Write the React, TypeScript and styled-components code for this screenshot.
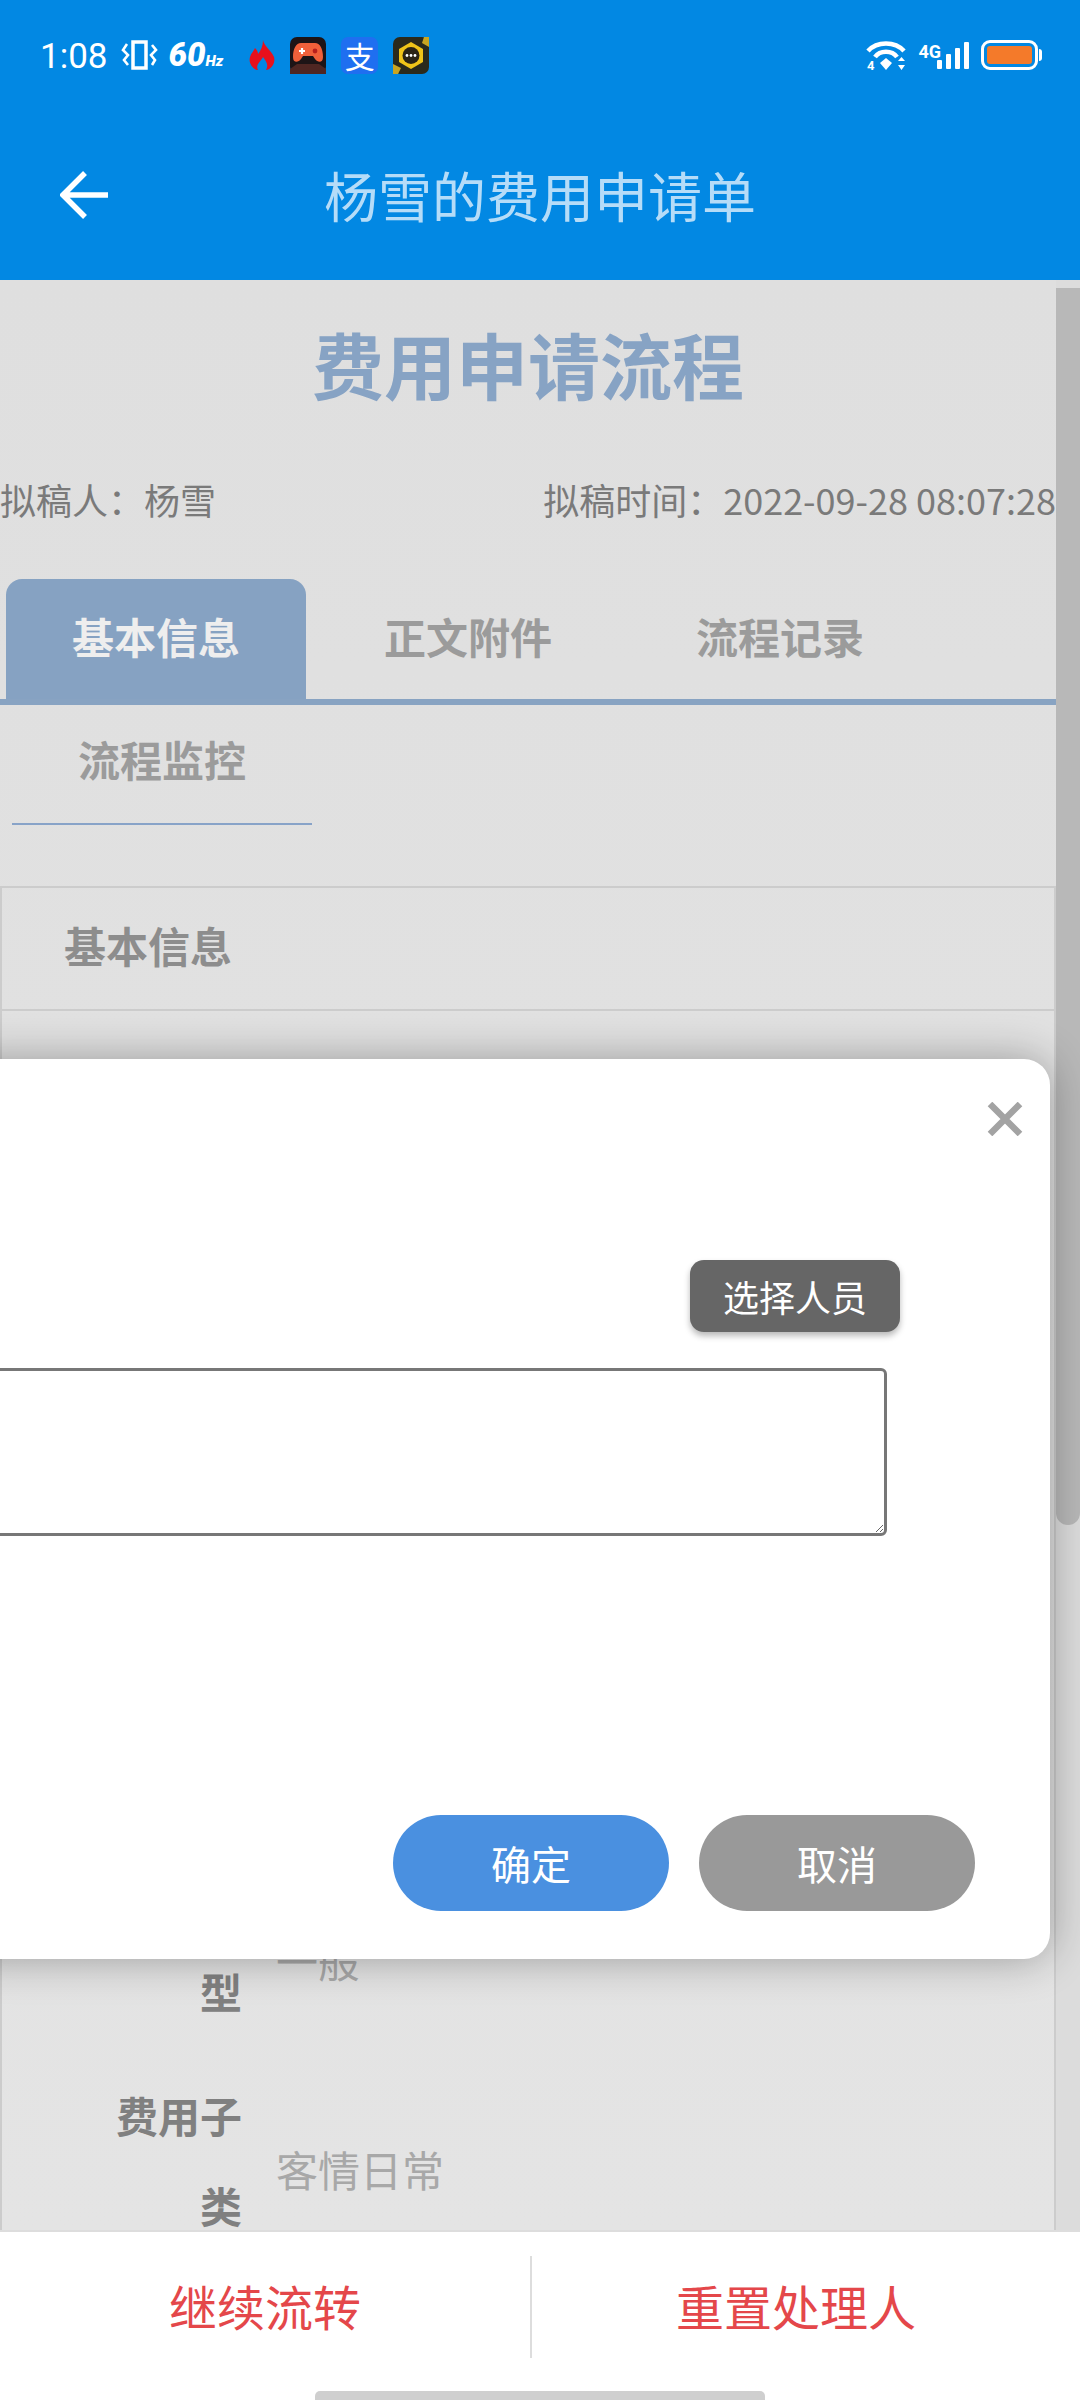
import styled, { createGlobalStyle } from 'styled-components'

const GlobalStyle = createGlobalStyle`
  html, body {
    margin: 0;
    padding: 0;
    background: #fff;
    font-family: "Noto Sans CJK SC", "Noto Sans", sans-serif;
  }
  * {
    box-sizing: border-box;
  }
`

const Screen = styled.div`
  position: relative;
  display: flex;
  flex-direction: column;
  width: 1080px;
  height: 2400px;
  overflow: hidden;
`

const Header = styled.header`
  flex: 0 0 280px;
  background: #0288e3;
  color: #fff;
`

const StatusBar = styled.div`
  display: flex;
  align-items: center;
  justify-content: space-between;
  height: 110px;
  padding: 0 42px 0 40px;
`

const StatusGroup = styled.div`
  display: flex;
  align-items: center;
`

const Time = styled.span`
  font-family: Roboto, sans-serif;
  font-size: 35px;
  line-height: 40px;
  margin: 4px 13px 0 0;
`

const RefreshRate = styled.span`
  font-family: Roboto, sans-serif;
  font-style: italic;
  font-weight: 900;
  font-size: 33px;
  line-height: 40px;
  margin: 5px 26px 0 11px;
  small {
    font-size: 15px;
  }
`

const AppIcons = styled.div`
  display: flex;
  align-items: center;
  gap: 15px;
`

const AlipayIcon = styled.span`
  display: flex;
  align-items: center;
  justify-content: center;
  width: 37px;
  height: 37px;
  border-radius: 7px;
  background: #1f6ff0;
  color: #fff;
  font-size: 30px;
  line-height: 37px;
`

const Network = styled.span`
  font-family: Roboto, sans-serif;
  font-weight: 700;
  font-size: 18px;
  line-height: 18px;
  align-self: flex-start;
  margin: 3px -4px 0 12px;
`

const Battery = styled.div`
  display: flex;
  align-items: center;
  width: 57px;
  height: 30px;
  margin-left: 12px;
  padding: 3px;
  border: 3px solid #fff;
  border-radius: 9px;
  position: relative;
  &::after {
    content: '';
    position: absolute;
    right: -7px;
    top: 6px;
    width: 3px;
    height: 12px;
    border-radius: 0 3px 3px 0;
    background: #fff;
  }
`

const BatteryLevel = styled.div`
  width: 100%;
  height: 100%;
  border-radius: 3px;
  background: #f47a2a;
`

const Toolbar = styled.div`
  display: grid;
  grid-template-columns: 1fr auto 1fr;
  align-items: center;
  height: 170px;
`

const BackIcon = styled.svg`
  display: block;
  width: 50px;
  height: 50px;
  margin-left: 60px;
`

const ToolbarTitle = styled.h1`
  margin: 0;
  font-size: 54px;
  font-weight: 400;
  line-height: 70px;
  color: #b5dcf8;
`

const Main = styled.main`
  position: relative;
  flex: 1;
  display: flex;
  min-height: 0;
  overflow: hidden;
  background: linear-gradient(#dfdfdf, #e4e4e4);
`

const Content = styled.div`
  flex: 0 0 1056px;
  padding-top: 43px;
`

const FlowTitle = styled.h2`
  margin: 0;
  font-size: 72px;
  font-weight: 700;
  line-height: 80px;
  text-align: center;
  color: #87a3c4;
`

const MetaRow = styled.div`
  display: flex;
  justify-content: space-between;
  margin-top: 76px;
  font-size: 36px;
  line-height: 40px;
  color: #7a7a7a;
  white-space: nowrap;
`

const TabRow = styled.div`
  display: flex;
  gap: 12px;
  margin-top: 60px;
  padding-left: 6px;
  border-bottom: 6px solid #88a3c2;
`

const Tab = styled.div<{ $active?: boolean }>`
  width: 300px;
  height: 120px;
  border-radius: 16px 16px 0 0;
  background: ${({ $active }) => ($active ? '#86a2c2' : 'transparent')};
  color: ${({ $active }) => ($active ? '#eeeeee' : '#9b9b9b')};
  font-size: 42px;
  font-weight: 700;
  line-height: 114px;
  text-align: center;
`

const WrappedTab = styled.div`
  width: 300px;
  height: 120px;
  margin-left: 12px;
  border-bottom: 2px solid #88a3c8;
  color: #9b9b9b;
  font-size: 42px;
  font-weight: 700;
  line-height: 108px;
  text-align: center;
`

const SectionTitle = styled.div`
  height: 125px;
  margin-top: 61px;
  padding-left: 62px;
  border: 2px solid #cccccc;
  color: #8d8d8d;
  font-size: 42px;
  font-weight: 700;
  line-height: 114px;
`

const FormBody = styled.div`
  display: flex;
  flex-direction: column;
  gap: 34px;
  min-height: 1221px;
  padding-top: 845px;
  border: solid #cccccc;
  border-width: 0 2px;
`

const FormRow = styled.div`
  display: flex;
  align-items: center;
`

const FormLabel = styled.div`
  width: 126px;
  margin-left: 114px;
  color: #808080;
  font-size: 42px;
  font-weight: 700;
  line-height: 90px;
  text-align: right;
`

const FormValue = styled.div<{ $drop: number }>`
  margin-left: 34px;
  padding-top: ${({ $drop }) => $drop}px;
  color: #a8a8a8;
  font-size: 42px;
  line-height: 56px;
`

const ScrollTrack = styled.div`
  flex: 0 0 24px;
  padding-top: 8px;
  background: #dcdcdc;
`

const ScrollThumb = styled.div`
  height: 1237px;
  border-radius: 0 0 12px 12px;
  background: #b8b8b8;
`

const Modal = styled.section`
  position: absolute;
  top: 779px;
  left: -50px;
  display: flex;
  flex-direction: column;
  align-items: flex-end;
  width: 1100px;
  height: 900px;
  padding: 43px 27px 48px 0;
  border-radius: 26px;
  background: #fff;
  box-shadow: 0 0 44px rgba(0, 0, 0, 0.32);
`

const CloseIcon = styled.svg`
  display: block;
  width: 36px;
  height: 34px;
`

const PickButton = styled.button`
  width: 210px;
  height: 72px;
  margin: 124px 123px 0 0;
  padding: 0;
  border: 0;
  border-radius: 14px;
  background: #666666;
  color: #fff;
  font-family: inherit;
  font-size: 36px;
  box-shadow: 0 4px 6px rgba(0, 0, 0, 0.28);
`

const Remark = styled.textarea`
  display: block;
  width: 1050px;
  height: 168px;
  margin: 36px 136px 0 0;
  border: 3px solid #777777;
  border-radius: 6px;
  outline: none;
  background: #fff;
`

const ModalActions = styled.div`
  display: flex;
  gap: 30px;
  margin: auto 48px 0 0;
`

const ActionButton = styled.button<{ $tone: string }>`
  width: 276px;
  height: 96px;
  padding: 0;
  border: 0;
  border-radius: 48px;
  background: ${({ $tone }) => $tone};
  color: #fff;
  font-family: inherit;
  font-size: 40px;
`

const Footer = styled.footer`
  flex: 0 0 170px;
  display: grid;
  grid-template-columns: 530px 530px;
  align-items: start;
  padding-top: 24px;
  border-top: 2px solid #dddddd;
  background: #fff;
`

const FooterAction = styled.div<{ $divided?: boolean }>`
  height: 102px;
  border-left: ${({ $divided }) => ($divided ? '2px solid #dddddd' : '0')};
  color: #e4474a;
  font-size: 48px;
  line-height: 98px;
  text-align: center;
`

const HomeIndicator = styled.div`
  position: absolute;
  left: 315px;
  bottom: 0;
  width: 450px;
  height: 9px;
  border-radius: 5px 5px 0 0;
  background: #cfcfcf;
`

const VibrateGlyph = () => (
  <svg width="37" height="30" viewBox="0 0 37 30" fill="none" stroke="#fff" strokeWidth="3">
    <rect x="12" y="2" width="13" height="26" strokeWidth="3.5" />
    <path d="M6 4 L2 10 L7 15 L3 20 L7 25" strokeWidth="2.6" />
    <path d="M31 5 L35 10 L30 15 L34 20 L31 25" strokeWidth="2.6" />
  </svg>
)

const FlameGlyph = () => (
  <svg width="26" height="30" viewBox="0 0 26 30">
    <path
      d="M14 0 C15 6 22 10 25 17 C27 24 21 30 17 30 C20 25 17 21 14 17 C12 21 6 25 9 30 C5 30 -1 24 1 17 C2 13 5 11 6 8 C8 10 9 12 9 14 C12 10 14 6 14 0 Z"
      fill="#e8101c"
    />
  </svg>
)

const GameGlyph = () => (
  <svg width="36" height="37" viewBox="0 0 36 37">
    <rect width="36" height="37" rx="7" fill="#1d1416" />
    <path d="M0 32 L7 27 H29 L36 32 V37 H0 Z" fill="#4f2622" />
    <path
      d="M11 6 H25 C30 6 33 12 33 20 C33 26 28 26 25 22 L23 19 H13 L11 22 C8 26 3 26 3 20 C3 12 6 6 11 6 Z"
      fill="#f0603a"
    />
    <path d="M9 14 H15 M12 11 V17" stroke="#fff" strokeWidth="2.2" />
    <circle cx="25" cy="14" r="2.4" fill="#b8201c" />
  </svg>
)

const BadgeGlyph = () => (
  <svg width="36" height="37" viewBox="0 0 36 37">
    <rect width="36" height="37" rx="7" fill="#2b2a1c" />
    <path d="M0 27 L8 31 L5 37 H0 Z M36 10 L29 6 L31 0 H36 Z" fill="#c8a522" />
    <path d="M18 5 L30 12 V25 L18 32 L6 25 V12 Z" fill="#f0c419" />
    <circle cx="18" cy="18.500" r="8.500" fill="#2b2416" />
    <circle cx="14" cy="18.500" r="1.400" fill="#fff" />
    <circle cx="18" cy="18.500" r="1.400" fill="#fff" />
    <circle cx="22" cy="18.500" r="1.400" fill="#fff" />
  </svg>
)

const WifiGlyph = () => (
  <svg width="40" height="31" viewBox="0 0 40 31" fill="none">
    <path d="M2 11 C11 1 29 1 38 11" stroke="#fff" strokeWidth="4.500" />
    <path d="M9 17 C14 10 26 10 31 17" stroke="#fff" strokeWidth="4.500" />
    <path d="M14 23 L20 18 L26 23 L20 30 Z" fill="#fff" />
    <text x="1" y="30" fill="#fff" fontSize="13" fontWeight="700" fontFamily="Roboto, sans-serif">
      4
    </text>
    <path d="M32 21 L35.500 17 L39 21 Z M32 25 L35.500 30 L39 25 Z" fill="#fff" />
  </svg>
)

const SignalGlyph = () => (
  <svg width="32" height="27" viewBox="0 0 32 27">
    <rect x="0" y="18" width="5" height="9" rx="1" fill="#fff" />
    <rect x="9" y="12" width="5" height="15" rx="1" fill="#fff" />
    <rect x="18" y="6" width="5" height="21" rx="1" fill="#fff" />
    <rect x="27" y="0" width="5" height="27" rx="1" fill="#fff" />
  </svg>
)

const App = () => {
  return (
    <Screen>
      <GlobalStyle />
      <Header>
        <StatusBar>
          <StatusGroup>
            <Time>1:08</Time>
            <VibrateGlyph />
            <RefreshRate>
              60<small>Hz</small>
            </RefreshRate>
            <AppIcons>
              <FlameGlyph />
              <GameGlyph />
              <AlipayIcon>支</AlipayIcon>
              <BadgeGlyph />
            </AppIcons>
          </StatusGroup>
          <StatusGroup>
            <WifiGlyph />
            <Network>4G</Network>
            <SignalGlyph />
            <Battery>
              <BatteryLevel />
            </Battery>
          </StatusGroup>
        </StatusBar>
        <Toolbar>
          <BackIcon viewBox="0 0 50 50" fill="none" stroke="#fff" strokeWidth="5.500">
            <path d="M48 25 H4 M25 3 L3 25 L25 47" />
          </BackIcon>
          <ToolbarTitle>杨雪的费用申请单</ToolbarTitle>
        </Toolbar>
      </Header>

      <Main>
        <Content>
          <FlowTitle>费用申请流程</FlowTitle>
          <MetaRow>
            <span>拟稿人：杨雪</span>
            <span>拟稿时间：2022-09-28 08:07:28</span>
          </MetaRow>
          <TabRow>
            <Tab $active>基本信息</Tab>
            <Tab>正文附件</Tab>
            <Tab>流程记录</Tab>
          </TabRow>
          <WrappedTab>流程监控</WrappedTab>
          <SectionTitle>基本信息</SectionTitle>
          <FormBody>
            <FormRow>
              <FormLabel>费用类型</FormLabel>
              <FormValue $drop={28}>一般</FormValue>
            </FormRow>
            <FormRow>
              <FormLabel>费用子类</FormLabel>
              <FormValue $drop={18}>客情日常</FormValue>
            </FormRow>
          </FormBody>
        </Content>
        <ScrollTrack>
          <ScrollThumb />
        </ScrollTrack>

        <Modal>
          <CloseIcon viewBox="0 0 36 34" fill="none" stroke="#a3a3a3" strokeWidth="6.500">
            <path d="M3 2 L33 32 M33 2 L3 32" />
          </CloseIcon>
          <PickButton>选择人员</PickButton>
          <Remark />
          <ModalActions>
            <ActionButton $tone="#4a90e0">确定</ActionButton>
            <ActionButton $tone="#999999">取消</ActionButton>
          </ModalActions>
        </Modal>
      </Main>

      <Footer>
        <FooterAction>继续流转</FooterAction>
        <FooterAction $divided>重置处理人</FooterAction>
      </Footer>
      <HomeIndicator />
    </Screen>
  )
}

export default App
